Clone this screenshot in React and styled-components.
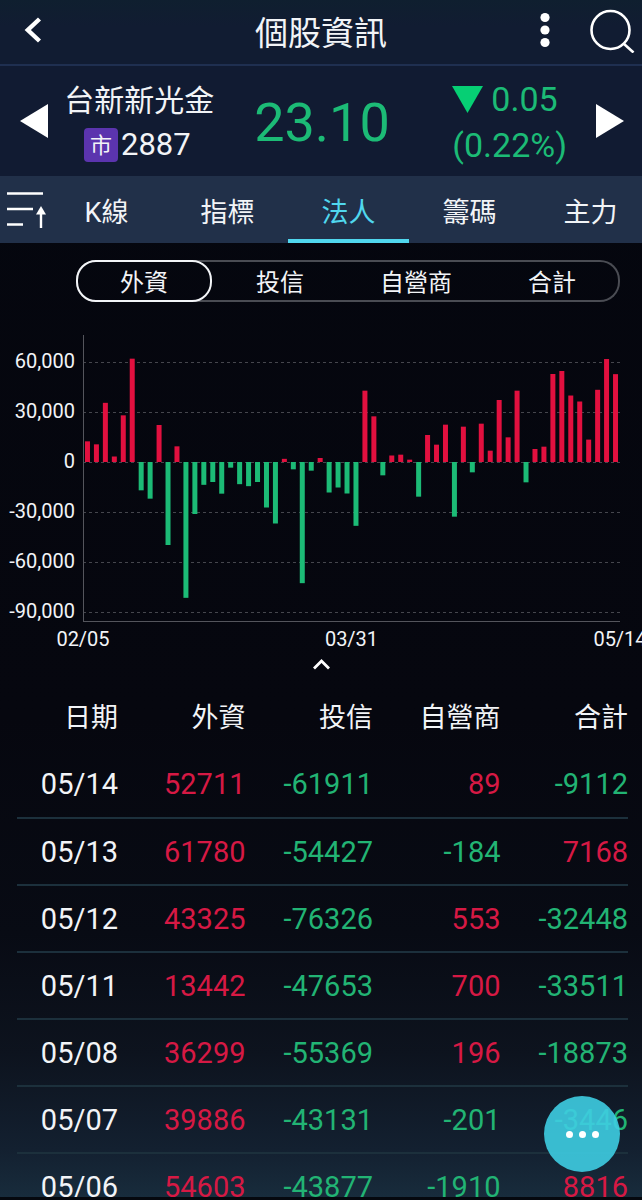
import React, { useState } from 'react';
import styled, { createGlobalStyle } from 'styled-components';

const GlobalStyle = createGlobalStyle`
  * { box-sizing: border-box; }
  body {
    margin: 0;
    background: #06070f;
    color: #f2f4f7;
    font-family: Roboto, "Noto Sans CJK TC", sans-serif;
  }
  button {
    padding: 0;
    border: none;
    background: none;
    color: inherit;
    font: inherit;
    cursor: pointer;
  }
`;

const RED = '#e2103f';
const GREEN = '#1cbb76';

const Screen = styled.div`
  position: relative;
  display: flex;
  flex-direction: column;
  height: 100vh;
  overflow: hidden;
  border-bottom: 3px solid #05080e;
  background: linear-gradient(180deg, #04060e 0%, #06070f 60%, #080b14 78%, #0d131e 88%, #132030 96%, #182c3c 100%);
`;

const Header = styled.header`
  display: grid;
  grid-template-columns: 1fr auto 1fr;
  align-items: center;
  flex: none;
  height: 66px;
  padding: 0 6px;
  border-bottom: 2px solid #1f2f50;
  background: linear-gradient(180deg, #0f1f2f, #111c32 40%);
`;

const Title = styled.h1`
  margin: 0;
  padding-top: 4px;
  font-size: 33px;
  line-height: 48px;
  font-weight: 400;
`;

const HeaderActions = styled.div`
  display: flex;
  justify-content: flex-end;
  align-items: center;
  gap: 36px;
  padding-bottom: 4px;
`;

const IconButton = styled.button`
  display: flex;
  align-items: center;
  justify-content: center;
  justify-self: start;

  svg { display: block; }
`;

const BackButton = styled(IconButton)`
  padding: 0 14px 4px;
`;

const Quote = styled.section`
  display: grid;
  grid-template-columns: 28px 1fr 1fr 1fr 28px;
  align-items: center;
  flex: none;
  height: 110px;
  padding: 0 18px 0 20px;
  background: #111b32;
`;

const Stock = styled.div`
  display: flex;
  flex-direction: column;
  align-items: center;
  padding-top: 4px;
`;

const StockName = styled.h2`
  margin: 0;
  font-size: 30px;
  line-height: 44px;
  font-weight: 400;
  white-space: nowrap;
`;

const StockCode = styled.div`
  display: flex;
  align-items: center;
  gap: 3px;
  padding-right: 4px;
  font-size: 31px;
  line-height: 44px;
`;

const Market = styled.span`
  width: 34px;
  height: 34px;
  border-radius: 4px;
  background: #5b34ae;
  font-size: 22px;
  line-height: 36px;
  text-align: center;
`;

const Price = styled.div`
  padding-top: 4px;
  color: ${GREEN};
  font-size: 54px;
  line-height: 64px;
  text-align: center;
`;

const Change = styled.div`
  justify-self: center;
  padding: 2px 0 0 10px;
  color: ${GREEN};
  font-size: 34px;
  line-height: 46px;
`;

const ChangeValue = styled.div`
  display: flex;
  align-items: center;
  gap: 8px;
`;

const TabBar = styled.nav`
  display: flex;
  align-items: stretch;
  flex: none;
  height: 67px;
  overflow: hidden;
  background: #213049;
`;

const SortButton = styled(IconButton)`
  flex: 0 0 44px;
  justify-content: flex-start;
  padding-left: 6px;
`;

const Tab = styled.button`
  flex: 0 0 121px;
  height: 67px;
  padding-top: 10px;
  border-bottom: 4px solid ${props => (props.$active ? '#50d7ee' : 'transparent')};
  color: ${props => (props.$active ? '#50d7ee' : 'inherit')};
  font-size: 27px;
  line-height: 40px;
`;

const Content = styled.main`
  flex: 1;
  min-height: 0;
  overflow: hidden;
`;

const Segments = styled.div`
  display: flex;
  height: 42px;
  margin: 17px 22px 0 76px;
  border-radius: 20px;
  box-shadow: inset 0 0 0 2px #4a4c53;
`;

const Segment = styled.button`
  flex: 1;
  padding-top: 4px;
  border: 2px solid ${props => (props.$active ? '#f2f4f7' : 'transparent')};
  border-radius: 20px;
  font-size: 24px;
  line-height: 34px;
`;

const Chart = styled.section`
  display: grid;
  grid-template-columns: 75px 1fr;
  column-gap: 8px;
  margin: 33px 22px 0 0;
`;

const YAxis = styled.div`
  display: flex;
  flex-direction: column;
  height: 287px;
  padding-top: 1px;
  text-align: right;
  font-size: 20px;
  line-height: 50px;

  span { flex: none; }
`;

const Plot = styled.svg`
  display: block;
  width: 100%;
  height: 287px;
  overflow: visible;
`;

const XAxis = styled.div`
  grid-column: 2;
  display: flex;
  justify-content: space-between;
  font-size: 20px;
  line-height: 35px;
`;

const XLabel = styled.span`
  display: flex;
  justify-content: center;
  width: 0;
`;

const Collapse = styled.button`
  display: block;
  width: 48px;
  height: 18px;
  margin: 0 auto;

  svg { display: block; margin: 0 auto; }
`;

const Table = styled.table`
  width: calc(100% - 31px);
  margin: 10px 14px 0 17px;
  border-collapse: collapse;
  table-layout: fixed;
`;

const HeadCell = styled.th`
  width: ${props => (props.$first ? '101px' : 'auto')};
  height: 66px;
  padding: 0;
  font-size: 27px;
  line-height: 40px;
  font-weight: 400;
  text-align: right;
`;

const Row = styled.tr`
  border-bottom: 2px solid #1c303c;
`;

const toneColors = { up: '#d61944', down: '#22b474', none: '#f2f4f7' };

const Cell = styled.td`
  height: 67px;
  padding: 0;
  color: ${props => toneColors[props.$tone]};
  font-size: 29px;
  line-height: 40px;
  text-align: right;
`;

const FloatingButton = styled.button`
  position: absolute;
  right: 22px;
  bottom: 25px;
  display: flex;
  align-items: center;
  justify-content: center;
  gap: 6px;
  width: 76px;
  height: 76px;
  border-radius: 50%;
  background: rgba(62, 205, 226, 0.9);
`;

const Dot = styled.span`
  width: 7px;
  height: 7px;
  border-radius: 50%;
  background: #fff;
`;

const tabs = ['K線', '指標', '法人', '籌碼', '主力'];
const investors = ['外資', '投信', '自營商', '合計'];
const levels = [60000, 30000, 0, -30000, -60000, -90000];

const volumes = [
  12400, 10600, 35500, 3300, 28000, 62000, -17000, -22000, 22200, -49800,
  9400, -81500, -31200, -13700, -12000, -19000, -3400, -13300, -14500, -12000,
  -27300, -36900, 1900, -4400, -72700, -5200, 2400, -18300, -15300, -18900,
  -38300, 42800, 27400, -8000, 3900, 4400, 1400, -20800, 16200, 10400,
  22400, -32800, 21200, -6200, 23000, 6800, 37200, 14800, 42800, -12200,
  7800, 9200, 52800, 54603, 39886, 36299, 13442, 43325, 61780, 52711,
];

const rows = [
  ['05/14', 52711, -61911, 89, -9112],
  ['05/13', 61780, -54427, -184, 7168],
  ['05/12', 43325, -76326, 553, -32448],
  ['05/11', 13442, -47653, 700, -33511],
  ['05/08', 36299, -55369, 196, -18873],
  ['05/07', 39886, -43131, -201, -3446],
  ['05/06', 54603, -43877, -1910, 8816],
];

// 600 張 = 1px，零軸在 y = 127
const ZERO_Y = 127;
const toY = value => ZERO_Y - value / 600;

const VolumeChart = () => (
  <Plot role="img" aria-label="外資買賣超">
    {levels.map(level => (
      <line
        key={level}
        x1="0"
        x2="100%"
        y1={toY(level) + 0.5}
        y2={toY(level) + 0.5}
        stroke="#45464d"
        strokeDasharray="3 3"
      />
    ))}
    {volumes.map((value, i) => (
      <svg key={i} x={`${((i + 0.5) / volumes.length) * 100}%`} overflow="visible">
        <rect
          x="-2.5"
          y={Math.min(toY(value), ZERO_Y)}
          width="5"
          height={Math.abs(value) / 600}
          fill={value > 0 ? RED : GREEN}
        />
      </svg>
    ))}
    <line x1="0.5" x2="0.5" y1="0" y2="287" stroke="#54555c" />
    <line x1="0" x2="100%" y1="286.5" y2="286.5" stroke="#54555c" />
  </Plot>
);

const App = () => {
  const [tab, setTab] = useState('法人');
  const [investor, setInvestor] = useState('外資');
  const [open, setOpen] = useState(true);

  return (
    <Screen>
      <GlobalStyle />

      <Header>
        <BackButton aria-label="返回">
          <svg width="26" height="30" viewBox="0 0 26 30" fill="none" stroke="#fff" strokeWidth="4.4">
            <path d="M19.5 4 7.8 15l11.7 11" />
          </svg>
        </BackButton>
        <Title>個股資訊</Title>
        <HeaderActions>
          <IconButton aria-label="更多">
            <svg width="10" height="36" viewBox="0 0 10 36" fill="#fff">
              <circle cx="5" cy="5.5" r="4.6" />
              <circle cx="5" cy="18" r="4.6" />
              <circle cx="5" cy="30.5" r="4.6" />
            </svg>
          </IconButton>
          <IconButton aria-label="搜尋">
            <svg width="50" height="46" viewBox="0 0 50 46" fill="none" stroke="#fff" strokeWidth="2.6">
              <circle cx="24.5" cy="23" r="19" />
              <path d="M37.5 36.5 47.5 45.5" />
            </svg>
          </IconButton>
        </HeaderActions>
      </Header>

      <Quote>
        <IconButton aria-label="上一檔">
          <svg width="28" height="34" viewBox="0 0 28 34" fill="#fff">
            <path d="M0 17 28 0v34z" />
          </svg>
        </IconButton>
        <Stock>
          <StockName>台新新光金</StockName>
          <StockCode>
            <Market>市</Market>
            <span>2887</span>
          </StockCode>
        </Stock>
        <Price>23.10</Price>
        <Change>
          <ChangeValue>
            <svg width="31" height="27" viewBox="0 0 31 27" fill="#06cf74">
              <path d="M0 0h31L15.5 27z" />
            </svg>
            0.05
          </ChangeValue>
          <div>(0.22%)</div>
        </Change>
        <IconButton aria-label="下一檔">
          <svg width="28" height="34" viewBox="0 0 28 34" fill="#fff">
            <path d="M28 17 0 0v34z" />
          </svg>
        </IconButton>
      </Quote>

      <TabBar>
        <SortButton aria-label="排序">
          <svg width="40" height="38" viewBox="0 0 40 38" fill="none" stroke="#fff" strokeWidth="2.4">
            <path d="M1 2.5h36M1 18h26M1 33.5h16M35 37V20" />
            <path d="M30 23.5 35 15l5 8.5z" fill="#fff" stroke="none" />
          </svg>
        </SortButton>
        {tabs.map(name => (
          <Tab key={name} $active={name === tab} onClick={() => setTab(name)}>{name}</Tab>
        ))}
      </TabBar>

      <Content>
        <Segments>
          {investors.map(name => (
            <Segment key={name} $active={name === investor} onClick={() => setInvestor(name)}>
              {name}
            </Segment>
          ))}
        </Segments>

        {open && (
          <Chart>
            <YAxis>
              {levels.map(level => <span key={level}>{level.toLocaleString('en-US')}</span>)}
            </YAxis>
            <VolumeChart />
            <XAxis>
              <XLabel>02/05</XLabel>
              <XLabel>03/31</XLabel>
              <XLabel>05/14</XLabel>
            </XAxis>
          </Chart>
        )}

        <Collapse aria-label="收合圖表" onClick={() => setOpen(!open)}>
          <svg width="18" height="16" viewBox="0 0 18 16" fill="none" stroke="#fff" strokeWidth="2.8">
            <path d="m2 10.5 7.5-7.5 7.5 7.5" />
          </svg>
        </Collapse>

        <Table>
          <thead>
            <tr>
              <HeadCell $first scope="col">日期</HeadCell>
              {investors.map(name => <HeadCell key={name} scope="col">{name}</HeadCell>)}
            </tr>
          </thead>
          <tbody>
            {rows.map(([date, ...values]) => (
              <Row key={date}>
                <Cell $tone="none">{date}</Cell>
                {values.map((value, i) => (
                  <Cell key={i} $tone={value > 0 ? 'up' : 'down'}>{value}</Cell>
                ))}
              </Row>
            ))}
          </tbody>
        </Table>
      </Content>

      <FloatingButton aria-label="選單">
        <Dot />
        <Dot />
        <Dot />
      </FloatingButton>
    </Screen>
  );
};

export default App;
